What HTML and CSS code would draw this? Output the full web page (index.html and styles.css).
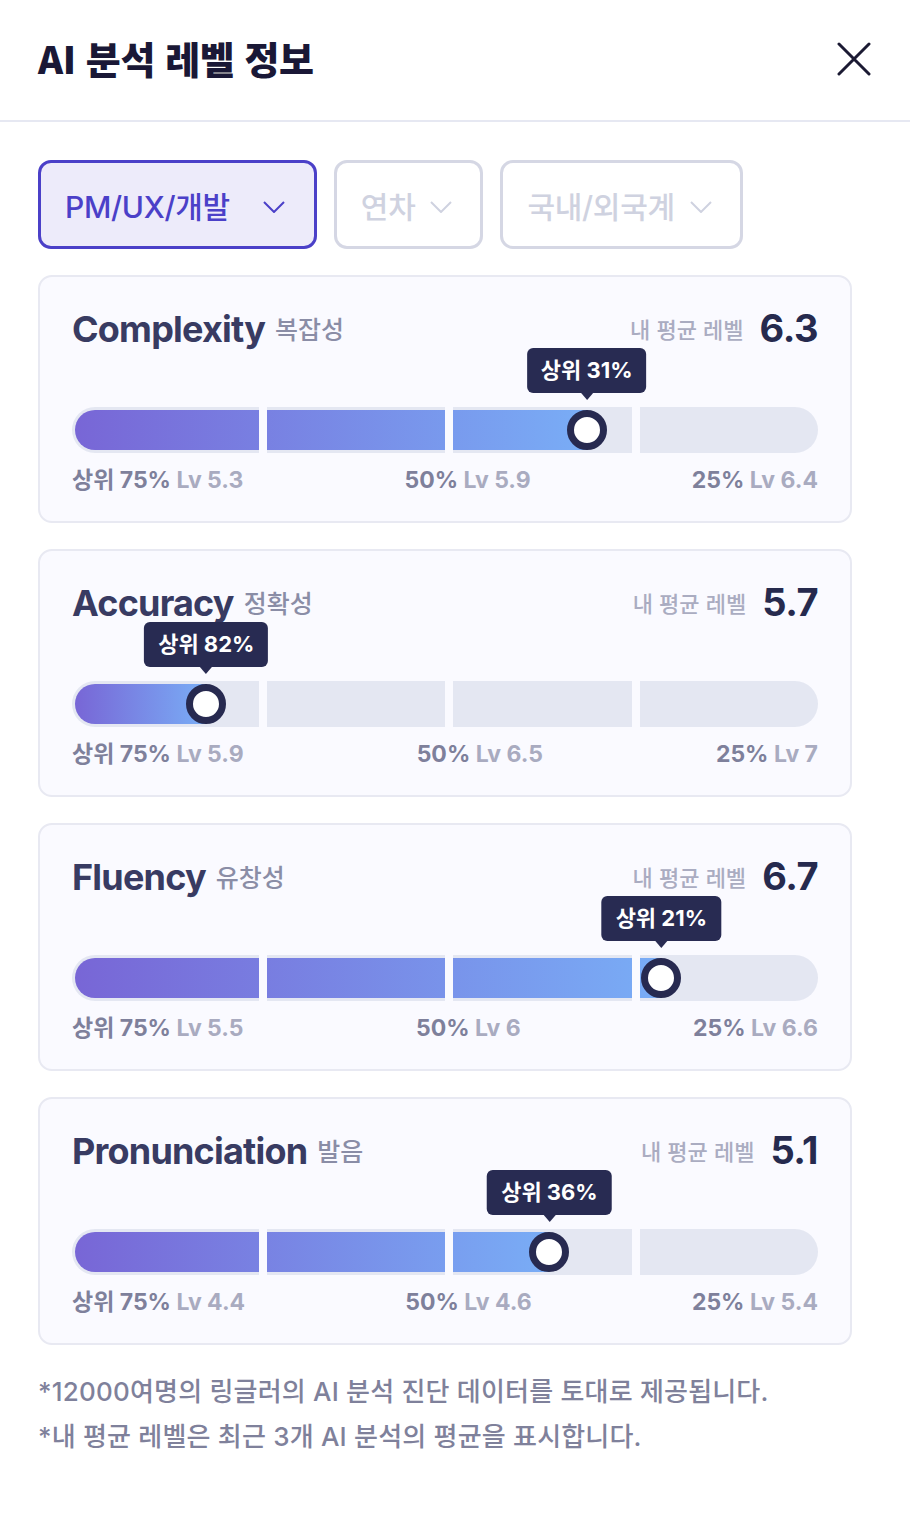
FILE: index.html
```html
<!DOCTYPE html>
<html lang="ko">
<head>
<meta charset="utf-8">
<link rel="stylesheet" href="styles.css">
</head>
<body>
<div class="sheet">
  <header class="header">
    <h1 class="title">AI 분석 레벨 정보</h1>
    <button class="close" aria-label="닫기">
      <svg width="34" height="34" viewBox="0 0 34 34"><path d="M2 2 L32 32 M32 2 L2 32" stroke="#1b1a33" stroke-width="3" stroke-linecap="round" fill="none"/></svg>
    </button>
  </header>

  <div class="filters">
    <div class="filter filter--active"><span>PM/UX/개발</span><svg class="chev" width="22" height="12" viewBox="0 0 22 12"><path d="M1 1 L11 11 L21 1" stroke="currentColor" stroke-width="2" fill="none"/></svg></div>
    <div class="filter"><span>연차</span><svg class="chev" width="22" height="12" viewBox="0 0 22 12"><path d="M1 1 L11 11 L21 1" stroke="currentColor" stroke-width="2" fill="none"/></svg></div>
    <div class="filter"><span>국내/외국계</span><svg class="chev" width="22" height="12" viewBox="0 0 22 12"><path d="M1 1 L11 11 L21 1" stroke="currentColor" stroke-width="2" fill="none"/></svg></div>
  </div>

  <div class="cards">
    <section class="card">
      <div class="card-head">
        <div class="name"><span class="en">Complexity</span><span class="ko">복잡성</span></div>
        <div class="mine"><span class="mine-label">내 평균 레벨</span><span class="mine-val">6.3</span></div>
      </div>
      <div class="track" style="--p:69%">
        <div class="fill"></div>
        <i class="sep s1"></i><i class="sep s2"></i><i class="sep s3"></i>
        <div class="knob"></div>
        <div class="tip">상위 31%</div>
      </div>
      <div class="labels">
        <span class="lb"><b>상위 75%</b> Lv 5.3</span>
        <span class="lb"><b>50%</b> Lv 5.9</span>
        <span class="lb"><b>25%</b> Lv 6.4</span>
      </div>
    </section>

    <section class="card">
      <div class="card-head">
        <div class="name"><span class="en">Accuracy</span><span class="ko">정확성</span></div>
        <div class="mine"><span class="mine-label">내 평균 레벨</span><span class="mine-val">5.7</span></div>
      </div>
      <div class="track" style="--p:18%">
        <div class="fill"></div>
        <i class="sep s1"></i><i class="sep s2"></i><i class="sep s3"></i>
        <div class="knob"></div>
        <div class="tip">상위 82%</div>
      </div>
      <div class="labels">
        <span class="lb"><b>상위 75%</b> Lv 5.9</span>
        <span class="lb"><b>50%</b> Lv 6.5</span>
        <span class="lb"><b>25%</b> Lv 7</span>
      </div>
    </section>

    <section class="card">
      <div class="card-head">
        <div class="name"><span class="en">Fluency</span><span class="ko">유창성</span></div>
        <div class="mine"><span class="mine-label">내 평균 레벨</span><span class="mine-val">6.7</span></div>
      </div>
      <div class="track" style="--p:79%">
        <div class="fill"></div>
        <i class="sep s1"></i><i class="sep s2"></i><i class="sep s3"></i>
        <div class="knob"></div>
        <div class="tip">상위 21%</div>
      </div>
      <div class="labels">
        <span class="lb"><b>상위 75%</b> Lv 5.5</span>
        <span class="lb"><b>50%</b> Lv 6</span>
        <span class="lb"><b>25%</b> Lv 6.6</span>
      </div>
    </section>

    <section class="card">
      <div class="card-head">
        <div class="name"><span class="en">Pronunciation</span><span class="ko">발음</span></div>
        <div class="mine"><span class="mine-label">내 평균 레벨</span><span class="mine-val">5.1</span></div>
      </div>
      <div class="track" style="--p:64%">
        <div class="fill"></div>
        <i class="sep s1"></i><i class="sep s2"></i><i class="sep s3"></i>
        <div class="knob"></div>
        <div class="tip">상위 36%</div>
      </div>
      <div class="labels">
        <span class="lb"><b>상위 75%</b> Lv 4.4</span>
        <span class="lb"><b>50%</b> Lv 4.6</span>
        <span class="lb"><b>25%</b> Lv 5.4</span>
      </div>
    </section>
  </div>

  <div class="notes">
    <p>*12000여명의 링글러의 AI 분석 진단 데이터를 토대로 제공됩니다.</p>
    <p>*내 평균 레벨은 최근 3개 AI 분석의 평균을 표시합니다.</p>
  </div>
</div>
</body>
</html>
```

FILE: styles.css
```css
* { box-sizing: border-box; }
html, body { margin: 0; padding: 0; background: #ffffff; }
body {
  font-family: "Inter", "Noto Sans CJK KR", sans-serif;
  color: #262a4e;
}
.sheet { width: 910px; }

.header {
  height: 122px;
  border-bottom: 2px solid #e6e8f2;
  display: flex;
  align-items: center;
  justify-content: space-between;
  padding: 0 38px 6px 38px;
}
.title {
  margin: 0;
  font-family: "Noto Sans CJK KR", sans-serif;
  font-weight: 900;
  font-size: 38px;
  letter-spacing: -0.4px;
  color: #1a1836;
}
.close {
  border: 0;
  background: none;
  padding: 0;
  width: 34px;
  height: 34px;
  margin-right: 1px;
  margin-top: 4px;
}

.filters {
  display: flex;
  gap: 17px;
  padding: 38px 38px 0;
}
.filter {
  height: 89px;
  display: flex;
  align-items: center;
  gap: 15px;
  padding: 0 28px 0 24px;
  border: 3px solid #d5d7e4;
  border-radius: 13px;
  color: #cfd2e0;
  font-family: "Inter", "Noto Sans CJK KR", sans-serif;
  font-size: 30px;
  font-weight: 500;
  letter-spacing: -0.3px;
  background: #fff;
}
.filter--active {
  border-color: #4b40c8;
  background: #edebfa;
  color: #4b40c8;
  gap: 33px;
  padding-right: 29px;
}
.chev { margin-top: 4px; }

.cards {
  display: flex;
  flex-direction: column;
  gap: 26px;
  padding: 26px 58px 0 38px;
}
.card {
  background: #fafaff;
  border: 2px solid #e8e9f2;
  border-radius: 14px;
  padding: 28px 32px 31px;
  height: 248px;
}
.card-head {
  display: flex;
  align-items: baseline;
  justify-content: space-between;
  height: 50px;
}
.name { display: flex; align-items: baseline; gap: 10px; }
.en {
  font-size: 36px;
  font-weight: 700;
  color: #383b62;
  letter-spacing: -0.8px;
}
.ko {
  font-family: "Noto Sans CJK KR", sans-serif;
  font-size: 25px;
  font-weight: 500;
  color: #8a8da6;
  position: relative;
  top: -3px;
}
.mine { display: flex; align-items: baseline; gap: 16px; }
.mine-label {
  font-family: "Noto Sans CJK KR", sans-serif;
  font-size: 22px;
  font-weight: 500;
  color: #aaacc1;
  position: relative;
  top: -4px;
}
.mine-val {
  font-size: 38px;
  font-weight: 700;
  color: #262a4e;
  letter-spacing: -0.5px;
}

.track {
  position: relative;
  margin-top: 52px;
  height: 46px;
  border-radius: 23px;
  background: #e4e7f2;
}
.fill {
  position: absolute;
  left: 3px;
  top: 3px;
  bottom: 3px;
  width: calc(var(--p) - 3px);
  border-radius: 20px 0 0 20px;
  background: linear-gradient(90deg, #7866d6, #79adf6);
}
.sep {
  position: absolute;
  top: 0;
  bottom: 0;
  width: 8px;
  background: #fafaff;
}
.s1 { left: 25%; }
.s2 { left: 50%; }
.s3 { left: 75%; }
.knob {
  position: absolute;
  left: var(--p);
  top: 50%;
  width: 40px;
  height: 40px;
  margin: -20px 0 0 -20px;
  border-radius: 50%;
  background: #fff;
  border: 7px solid #272a50;
}
.tip {
  position: absolute;
  left: var(--p);
  bottom: calc(100% + 14px);
  transform: translateX(-50%);
  background: #282b52;
  color: #fff;
  font-size: 22px;
  font-weight: 700;
  height: 45px;
  line-height: 45px;
  padding: 0 14px;
  border-radius: 6px;
  white-space: nowrap;
  letter-spacing: 0;
}
.tip::after {
  content: "";
  position: absolute;
  left: 50%;
  top: 100%;
  margin-left: -6px;
  border: 6px solid transparent;
  border-top: 7px solid #282b52;
  border-bottom: 0;
}

.labels {
  display: flex;
  justify-content: space-between;
  margin-top: 13px;
  font-size: 23px;
  line-height: 28px;
  font-weight: 700;
  color: #a9abc0;
  letter-spacing: 0;
}
.lb b { color: #7e809b; font-weight: 700; }

.notes {
  padding: 24px 38px 0;
  font-family: "Inter", "Noto Sans CJK KR", sans-serif;
  font-size: 26px;
  font-weight: 500;
  color: #7f819b;
  letter-spacing: 0.2px;
}
.notes p { margin: 0; line-height: 45px; }
```
